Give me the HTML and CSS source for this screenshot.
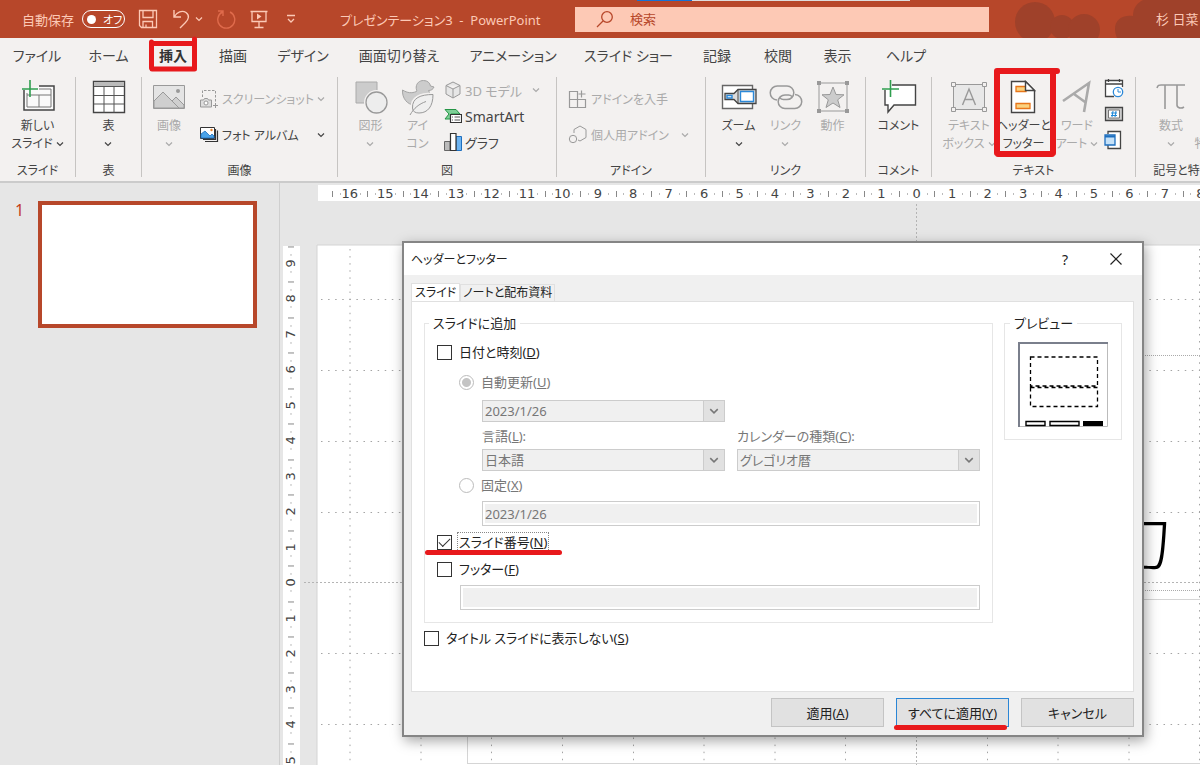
FILE: index.html
```html
<!DOCTYPE html>
<html lang="ja">
<head>
  <meta charset="UTF-8">
  <title>プレゼンテーション3 - PowerPoint</title>
  <meta name="viewport" content="width=device-width, initial-scale=1.0">
  <link rel="stylesheet" href="styles.css">
</head>
<body>

  <svg class="defs" aria-hidden="true">
    <symbol id="chev" viewBox="0 0 8 8"><path d="M1 2.5l3 3 3-3" fill="none" stroke="currentColor" stroke-width="1.2"/></symbol>
  </svg>

  <!-- タイトルバー -->
  <header class="titlebar">
    <div class="quick">
      <span>自動保存</span>
      <button class="toggle" type="button"><i></i>オフ</button>
      <button type="button" aria-label="保存"><svg width="20" height="20" viewBox="0 0 20 20"><path d="M1.500 1.500h17v17h-15l-2-2zM5 1.500v7h10v-7M5 18.500v-6h9.500v6M8 18.500v-3" fill="none" stroke="currentColor" stroke-width="1.300"/></svg></button>
      <button type="button" aria-label="元に戻す"><svg width="20" height="20" viewBox="0 0 20 20"><path d="M3 1v7h7M3 8C6 3 11 1 15 3.500c4 3 2.500 7-.5 10L9 19" fill="none" stroke="currentColor" stroke-width="1.400"/></svg><svg class="chev"><use href="#chev"/></svg></button>
      <button type="button" class="faded" aria-label="やり直し"><svg width="20" height="20" viewBox="0 0 20 20"><path d="M2 2h5v5M6.500 3A8.500 8.500 0 1 0 14 3" fill="none" stroke="currentColor" stroke-width="1.400"/></svg></button>
      <button type="button" aria-label="最初から"><svg width="20" height="20" viewBox="0 0 20 20"><path d="M1.500 2.500h17M3 2.500v10h14v-10M10 12.500v6M5.500 18.500h9" fill="none" stroke="currentColor" stroke-width="1.300"/><path d="M8 4.500v6l4.500-3z" fill="currentColor"/></svg></button>
      <button type="button" class="more" aria-label="カスタマイズ"><svg width="10" height="10" viewBox="0 0 10 10"><path d="M1 1.500h8M2 5l3 3 3-3" fill="none" stroke="currentColor" stroke-width="1.300"/></svg></button>
    </div>
    <div class="doc">プレゼンテーション3&nbsp; -&nbsp; PowerPoint</div>
    <label class="search">
      <svg width="18" height="18" viewBox="0 0 18 18"><circle cx="11" cy="7" r="5.300" fill="none" stroke="#b7472a" stroke-width="1.300"/><path d="M7 11l-6 6" stroke="#b7472a" stroke-width="1.300"/></svg>
      <input type="text" placeholder="検索" aria-label="検索">
    </label>
    <div class="user">
      <svg class="clouds" width="212" height="38"><g fill="#9a402a"><circle cx="34" cy="22" r="20"/><circle cx="61" cy="27" r="12"/><circle cx="83" cy="30" r="16"/><path d="M116 38c-6-14 2-24 16-22 0-8 4-13 10-16h70v38z"/></g></svg>
      <span>杉 日菜</span>
    </div>
    <i class="progress"></i>
  </header>

  <!-- リボンのタブ -->
  <nav class="tabs">
    <a href="#">ファイル</a>
    <a href="#">ホーム</a>
    <a href="#" class="current">挿入
      <svg class="mark" width="52" height="38"><path d="M5 7.500h41M4.500 6v26M5 33h41M47.500 3v30" fill="none" stroke="#e8191c" stroke-width="5" stroke-linecap="round"/></svg>
    </a>
    <a href="#">描画</a>
    <a href="#">デザイン</a>
    <a href="#">画面切り替え</a>
    <a href="#">アニメーション</a>
    <a href="#">スライド ショー</a>
    <a href="#">記録</a>
    <a href="#">校閲</a>
    <a href="#">表示</a>
    <a href="#">ヘルプ</a>
  </nav>

  <!-- リボン -->
  <div class="ribbon">
    <section class="group">
      <div class="tools">
        <button class="big" type="button">
          <svg width="36" height="36" viewBox="0 0 36 36"><path d="M4 11v20h30V7H19" fill="#fafafa" stroke="#444" stroke-width="1.500"/><path d="M7 14v14h24V10H19M7 16h24M19 16v12" fill="none" stroke="#777"/><path d="M2 10h16M10 1v17" stroke="#2f9e4f" stroke-width="1.600"/></svg>
          <span>新しい<br>スライド <svg class="chev"><use href="#chev"/></svg></span>
        </button>
      </div>
      <h2>スライド</h2>
    </section>

    <section class="group">
      <div class="tools">
        <button class="big" type="button">
          <svg width="34" height="34" viewBox="0 0 34 34"><path d="M1.500 1.500h31v31h-31z" fill="#fff" stroke="#444" stroke-width="1.400"/><path d="M2 2h30v4H2z" fill="#bbb"/><path d="M2 6.500h30M2 15.500h30M2 24h30M12 6.500v26M22 6.500v26" stroke="#555" fill="none"/></svg>
          <span>表<br><svg class="chev"><use href="#chev"/></svg></span>
        </button>
      </div>
      <h2>表</h2>
    </section>

    <section class="group pictures">
      <div class="tools">
        <button class="big off" type="button">
          <svg width="34" height="26" viewBox="0 0 34 26"><path d="M1.500 1.500h31v23h-31z" fill="#e4e4e4" stroke="#999"/><path d="M2 17L11 8l9 9 4-4 8 8v3H2z" fill="#cfcfcf" stroke="#999"/><path d="M20 17l7 7" stroke="#999"/><circle cx="26" cy="7" r="2" fill="#999"/></svg>
          <span>画像<br><svg class="chev"><use href="#chev"/></svg></span>
        </button>
        <div class="stack wide">
          <button class="small off" type="button"><svg width="20" height="20" viewBox="0 0 20 20"><path d="M3.500 8V1.500h13V14" fill="none" stroke="#999" stroke-dasharray="2.500 1.500"/><path d="M1.500 11h3l1-1.500h3l1 1.500h3v7h-11z" fill="#ddd" stroke="#999"/><circle cx="7" cy="14" r="2" fill="#fff" stroke="#999"/><path d="M14 16.500h5M16.500 14v5" stroke="#999"/></svg>スクリーンショット <svg class="chev last"><use href="#chev"/></svg></button>
          <button class="small" type="button"><svg width="20" height="18" viewBox="0 0 20 18"><path d="M6 15.500h12.500V4.500M4 13.500h12.500V3" fill="none" stroke="#333" stroke-width="1.200"/><path d="M1.500 1.500h14v11h-14z" fill="#fff" stroke="#333"/><path d="M2 8l4-3 5 5 2-2 2 2v2H2z" fill="#4ba3e8" stroke="#1e6fbf" stroke-width=".8"/><circle cx="12.500" cy="4" r="1.200" fill="#e8822a"/></svg>フォト アルバム <svg class="chev last"><use href="#chev"/></svg></button>
        </div>
      </div>
      <h2>画像</h2>
    </section>

    <section class="group shapes">
      <div class="tools">
        <button class="big narrow off" type="button">
          <svg width="34" height="34" viewBox="0 0 34 34"><path d="M2 2h21v21H2z" fill="#ccc" stroke="#aaa"/><circle cx="22.500" cy="22.500" r="11" fill="#f1efee" stroke="#f3f1f0" stroke-width="3"/><circle cx="22.500" cy="22.500" r="10.500" fill="#ededed" stroke="#999" stroke-width="1.300"/></svg>
          <span>図形<br><svg class="chev"><use href="#chev"/></svg></span>
        </button>
        <button class="big narrow off" type="button">
          <svg width="34" height="36" viewBox="0 0 34 36"><path d="M1.500 11c5 3 9 3.500 14 1.500.8-.8-.5-2-.3-4.500C15.600 4 18.500 1.500 22.500 1.500s6.500 2.500 7 5.500l3.500 1c-1 2.500-3 3.500-5.500 3.500 1.500 2 1 4.500.5 5.500-3 8-9 9-14 9C6 26 1 19 1.500 11z" fill="#ccc" stroke="#a4a4a4"/><path d="M11.500 29c-.5-10 8-13.500 20.500-13.500C32 27 27 34 18 34c-4 0-6.300-1.500-6.500-5z" fill="#efefef" stroke="#f3f1f0" stroke-width="4"/><path d="M11.500 29c-.5-10 8-13.500 20.500-13.500C32 27 27 34 18 34c-4 0-6.300-1.500-6.500-5z" fill="#efefef" stroke="#999"/><path d="M9 36c4-7 9-11 16-13.500" fill="none" stroke="#999"/></svg>
          <span>アイ<br>コン</span>
        </button>
        <div class="stack">
          <button class="small off" type="button"><svg width="18" height="18" viewBox="0 0 18 18"><path d="M9 1l7 3.500v8.500l-7 4-7-4V4.500zM2 4.500l7 3.500 7-3.500M9 8v9" fill="#e6e6e6" stroke="#999"/></svg>3D モデル <svg class="chev last"><use href="#chev"/></svg></button>
          <button class="small latin" type="button"><svg width="18" height="16" viewBox="0 0 18 16"><path d="M1 1.500h11l4 4.500h-9v5H1L5 6z" fill="#7dcf96" stroke="#259546"/><path d="M6.500 6.500h11v8h-11z" fill="#fff" stroke="#333" stroke-width="1.200"/><path d="M8 9h1M8 12h1M10.500 9H16M10.500 12H16" stroke="#555"/></svg>SmartArt</button>
          <button class="small" type="button"><svg width="18" height="20" viewBox="0 0 18 20"><path d="M.5 9.500H6v9H.5z" fill="#bbb" stroke="#666"/><path d="M12 4.500h5.500v14H12z" fill="#6db4f2" stroke="#1e6fbf"/><path d="M6.500 1.500H12v17H6.500z" fill="#fff" stroke="#333" stroke-width="1.200"/></svg>グラフ</button>
        </div>
      </div>
      <h2>図</h2>
    </section>

    <section class="group">
      <div class="tools">
        <div class="stack wide">
          <button class="small off" type="button"><svg width="20" height="20" viewBox="0 0 20 20"><path d="M1.500 2.500h8v16h-8zM1.500 10.500h16v8h-8M17.500 10.500v8h-8M13.500 1.500v7M10.500 5h7" fill="none" stroke="#999" stroke-width="1.200"/></svg>アドインを入手</button>
          <button class="small off" type="button"><svg width="20" height="20" viewBox="0 0 20 20"><path d="M6 8V4.500l6-3.500 6 3.500v8l-6 3.500-2-1" fill="none" stroke="#999"/><circle cx="5" cy="14" r="3.700" fill="none" stroke="#999"/></svg>個人用アドイン <svg class="chev last"><use href="#chev"/></svg></button>
        </div>
      </div>
      <h2>アドイン</h2>
    </section>

    <section class="group">
      <div class="tools">
        <button class="big narrow" type="button">
          <svg width="36" height="26" viewBox="0 0 36 26"><path d="M1.500 1.500h30v23h-30z" fill="#fff" stroke="#666" stroke-width="1.400"/><path d="M4 9.500h9l4-4h18v14H17l-4-4H4z" fill="#ddd" stroke="#444" stroke-width="1.300"/><path d="M17 5.500v14" stroke="#444"/><path d="M6 11.500h5v2.500H6zM19.500 7.500h13v10h-13z" fill="#fff" stroke="#2b88d8" stroke-width="1.400"/></svg>
          <span>ズーム<br><svg class="chev"><use href="#chev"/></svg></span>
        </button>
        <button class="big narrow off" type="button">
          <svg width="34" height="26" viewBox="0 0 34 26"><path d="M8 16a7 7 0 0 1 .5-14H18a6.800 6.800 0 0 1 0 13.600h-3.500a5 5 0 0 1-3.500-1.600M26 10.500a7 7 0 0 1-.5 14H16a6.800 6.800 0 0 1 0-13.600h3.500a5 5 0 0 1 3.500 1.600" fill="none" stroke="#999" stroke-width="1.500"/></svg>
          <span>リンク<br><svg class="chev"><use href="#chev"/></svg></span>
        </button>
        <button class="big narrow off" type="button">
          <svg width="34" height="34" viewBox="0 0 34 34"><path d="M3 3h28v28H3z" fill="none" stroke="#999"/><path d="M1 1h4v4H1zM29 1h4v4h-4zM1 29h4v4H1zM29 29h4v4h-4z" fill="#999"/><path d="M17 7l3 7.500 8 .3-6.300 5 2.300 7.700-7-4.500-7 4.500 2.300-7.700-6.300-5 8-.3z" fill="#ccc" stroke="#999"/></svg>
          <span>動作</span>
        </button>
      </div>
      <h2>リンク</h2>
    </section>

    <section class="group">
      <div class="tools">
        <button class="big" type="button">
          <svg width="36" height="36" viewBox="0 0 36 36"><path d="M11 6h23.500v20H13l-6 7v-7H4V11" fill="#fff" stroke="#444" stroke-width="1.400"/><path d="M1 10h17M9.500 1v17" stroke="#2f9e4f" stroke-width="1.600"/></svg>
          <span>コメント</span>
        </button>
      </div>
      <h2>コメント</h2>
    </section>

    <section class="group">
      <div class="tools text-tools">
        <button class="big off" type="button">
          <svg width="38" height="32" viewBox="0 0 38 32"><path d="M3.500 3.500h31v25h-31z" fill="#e8e8e8" stroke="#999"/><path d="M1.500 1.500h4v4h-4zM32.500 1.500h4v4h-4zM1.500 26.500h4v4h-4zM32.500 26.500h4v4h-4z" fill="#f3f1f0" stroke="#999"/><path d="M12.500 24L19 8l6.500 16M15 18.500h8" fill="none" stroke="#999" stroke-width="1.400"/></svg>
          <span>テキスト<br>ボックス <svg class="chev"><use href="#chev"/></svg></span>
        </button>
        <button class="big" type="button">
          <svg width="26" height="34" viewBox="0 0 26 34"><path d="M1.500 1.500h14l9 9v22h-23z" fill="#fff" stroke="#444" stroke-width="1.400"/><path d="M6 6.500h10v5H6zM6 23.500h14v5H6z" fill="#fbd27f" stroke="#e8761a" stroke-width="1.300"/><path d="M15.500 1.500v9h9z" fill="#fff" stroke="#444" stroke-width="1.400"/></svg>
          <span>ヘッダーと<br>フッター</span>
          <svg class="mark" width="72" height="96"><path d="M6 6h60M6 6v82M7 89h54M62 6v82" fill="none" stroke="#e8191c" stroke-width="6" stroke-linecap="round"/></svg>
        </button>
        <button class="big off" type="button">
          <svg width="30" height="34" viewBox="0 0 30 34"><path d="M1 21L27 3l-5 29M12 14l11 8" fill="none" stroke="#aaa" stroke-width="2.600"/></svg>
          <span>ワード<br>アート <svg class="chev"><use href="#chev"/></svg></span>
        </button>
        <div class="icons">
          <button type="button" aria-label="日付と時刻"><svg width="20" height="20" viewBox="0 0 20 20"><path d="M10 18.500H1.500v-16h17V9" fill="#fff" stroke="#444" stroke-width="1.300"/><path d="M1.500 6h17M4.500 1v3M15.500 1v3" stroke="#444" stroke-width="1.300"/><circle cx="14" cy="14" r="4.700" fill="#fff" stroke="#2b88d8" stroke-width="1.300"/><path d="M14 11v3h3" fill="none" stroke="#2b88d8"/></svg></button>
          <button type="button" aria-label="スライド番号"><svg width="20" height="16" viewBox="0 0 20 16"><path d="M1.500 1.500h17v13h-17z" fill="#ccc" stroke="#444" stroke-width="1.300"/><path d="M4.500 4h11v8h-11z" fill="#fff" stroke="#777"/><path d="M9 5l-1 6M12 5l-1 6M7 7h6M7 9.500h6" stroke="#1e88d8"/></svg></button>
          <button type="button" aria-label="オブジェクト"><svg width="20" height="20" viewBox="0 0 20 20"><path d="M4 4V1.500h12.500v17H4V15" fill="#fff" stroke="#444" stroke-width="1.300"/><path d="M1 5h10v10H1z" fill="#c5e1f8" stroke="#1e6fbf" stroke-width="1.300"/><path d="M1 6.500h10" stroke="#1e6fbf" stroke-width="2"/></svg></button>
        </div>
      </div>
      <h2>テキスト</h2>
    </section>

    <section class="group cut">
      <div class="tools">
        <button class="big narrow off" type="button">
          <svg width="30" height="28" viewBox="0 0 30 28"><path d="M1 5c1-3 2-3 4-3h24M9 2v24M21 2v20c0 3 4 4 7 2" fill="none" stroke="#999" stroke-width="1.600"/></svg>
          <span>数式<br><svg class="chev"><use href="#chev"/></svg></span>
        </button>
        <button class="big narrow off" type="button">
          <svg width="10" height="34"></svg>
          <span>記号と<br>特殊文字</span>
        </button>
      </div>
      <h2>記号と特殊文字</h2>
    </section>
  </div>

  <!-- 編集領域 -->
  <main class="workspace">
    <aside class="slides">
      <b>1</b>
      <div class="thumb"></div>
    </aside>

    <div class="editor">
      <div class="ruler-h" id="rulerH"></div>
      <div class="ruler-v" id="rulerV"></div>
      <svg class="canvas">
        <g transform="translate(-280 -183)">
          <path d="M317 245h1000v700H317z" fill="#fff" stroke="#d4d4d4"/>
          <g fill="none" stroke="#a4a4a4" stroke-dasharray="1.500 5.580">
            <path d="M350 249v540M421 249v540M491.500 249v540M562.500 249v540M633.500 249v540M704 249v540M775 249v540M845.500 249v540M987.500 249v540M1058 249v540M1129 249v540M1199.500 249v540"/>
            <path d="M321 299.500h900M321 370.500h900M321 441.500h900M321 512.500h900M321 653.500h900M321 724.500h900"/>
          </g>
          <g fill="none" stroke="#b4b4b4" stroke-dasharray="2 2">
            <path d="M916.500 204v600M304 582.500h900"/>
          </g>
          <g fill="none" stroke="#aaa" stroke-dasharray="1 1">
            <path d="M467 355.500h900v235H467zM467.500 599.500h900v164h-900z"/>
          </g>
          <text class="title-text" x="1105" y="564">力</text>
        </g>
      </svg>

      <!-- ヘッダーとフッター -->
      <form class="dialog">
        <div class="dialog-title">
          <h1>ヘッダーとフッター</h1>
          <button type="button" class="help">?</button>
          <button type="button" aria-label="閉じる"><svg width="12" height="12" viewBox="0 0 12 12"><path d="M.5.5l11 11M11.500.5l-11 11" stroke="#222" stroke-width="1.200"/></svg></button>
        </div>
        <div class="dialog-body">
          <div class="dialog-tabs">
            <button type="button" class="active">スライド</button>
            <button type="button">ノートと配布資料</button>
          </div>
          <div class="panel">
            <fieldset class="add">
              <legend>スライドに追加</legend>
              <label class="row"><input type="checkbox"><span>日付と時刻(<u>D</u>)</span></label>
              <label class="row sub gray first"><input type="radio" name="date" checked disabled><span>自動更新(<u>U</u>)</span></label>
              <div class="pair date">
                <div class="pick"><select aria-label="日付" disabled><option>2023/1/26</option></select><svg class="chev"><use href="#chev"/></svg></div>
              </div>
              <div class="pair">
                <div>
                  <label for="lang">言語(<u>L</u>):</label>
                  <div class="pick"><select id="lang" disabled><option>日本語</option></select><svg class="chev"><use href="#chev"/></svg></div>
                </div>
                <div>
                  <label for="cal">カレンダーの種類(<u>C</u>):</label>
                  <div class="pick"><select id="cal" disabled><option>グレゴリオ暦</option></select><svg class="chev"><use href="#chev"/></svg></div>
                </div>
              </div>
              <label class="row sub gray fixed"><input type="radio" name="date" disabled><span>固定(<u>X</u>)</span></label>
              <input class="field indent" type="text" value="2023/1/26" aria-label="固定の日付" disabled>
              <label class="row number"><input type="checkbox" checked><span class="focus">スライド番号(<u>N</u>)</span><i class="line"></i></label>
              <label class="row foot"><input type="checkbox"><span>フッター(<u>F</u>)</span></label>
              <input class="field" type="text" aria-label="フッターの文字" disabled>
            </fieldset>
            <fieldset class="preview">
              <legend>プレビュー</legend>
              <svg width="90" height="85" viewBox="0 0 90 85"><path d="M0 0h90v85H0z" fill="#fff"/><path d="M.5 84.500h89V1" fill="none" stroke="#bbb"/><path d="M1 85V1h89" fill="none" stroke="#7a7f8c" stroke-width="2"/><path d="M12.500 15h67v29h-67zM12.500 45.500h67v19h-67z" fill="none" stroke="#000" stroke-width="1.300" stroke-dasharray="4 3"/><path d="M8 79.500h19v4H8zM32 79.500h29v4H32z" fill="#fff" stroke="#000" stroke-width="1.400"/><path d="M65 79h20v5H65z"/></svg>
            </fieldset>
            <label class="row hide-title"><input type="checkbox"><span>タイトル スライドに表示しない(<u>S</u>)</span></label>
          </div>
          <div class="actions">
            <button type="button">適用(<u>A</u>)</button>
            <button type="button" class="default">すべてに適用(<u>Y</u>)<i class="line"></i></button>
            <button type="button">キャンセル</button>
          </div>
        </div>
      </form>
    </div>
  </main>

  <script>
    // ルーラーの目盛り
    function ruler(id, from, to) {
      let html = '';
      for (let n = -from; n <= to; n++) {
        html += '<span>' + Math.abs(n) + '</span>';
      }
      document.getElementById(id).innerHTML = html;
    }
    ruler('rulerH', 16, 8);
    ruler('rulerV', 9, 5);
  </script>

</body>
</html>
```
FILE: styles.css
```css
* {
  box-sizing: border-box;
}

body {
  margin: 0;
  min-height: 100vh;
  display: flex;
  flex-direction: column;
  overflow: hidden;
  font-family: "Noto Sans", "Noto Sans CJK JP", sans-serif;
  font-size: 13px;
  font-feature-settings: "palt";
  color: #444;
  background: #e6e6e6;
}

button, input, select {
  font: inherit;
  font-feature-settings: inherit;
  color: inherit;
}

button {
  padding: 0;
  border: none;
  background: none;
  white-space: nowrap;
}

.defs {
  position: absolute;
  width: 0;
  height: 0;
}

.chev {
  width: 8px;
  height: 8px;
}

/* タイトルバー */
.titlebar {
  position: relative;
  display: grid;
  grid-template-columns: 340px 235px minmax(0, 414px) 1fr;
  align-items: center;
  height: 38px;
  background: #b7472a;
  color: #fcc9b6;
}

.quick {
  display: flex;
  align-items: center;
  gap: 13px;
  padding-left: 22px;
}

.quick button {
  display: flex;
  align-items: center;
  gap: 4px;
}

.quick .toggle {
  gap: 7px;
  width: 43px;
  height: 18px;
  margin-left: -5px;
  padding-left: 4px;
  border: 1px solid #fff;
  border-radius: 9px;
  font-size: 11px;
  color: #fff;
}

.toggle i {
  width: 9px;
  height: 9px;
  border-radius: 50%;
  background: #fff;
}

.quick .faded {
  color: #df6b4c;
}

.quick .more {
  margin-left: 4px;
}

.search {
  display: flex;
  align-items: center;
  gap: 14px;
  height: 25px;
  padding-left: 21px;
  background: #fdc9b5;
}

.search input {
  flex: 1;
  min-width: 0;
  border: none;
  outline: none;
  background: none;
}

.search input::placeholder {
  color: #b7472a;
}

.user {
  position: relative;
  height: 38px;
  line-height: 38px;
  padding-left: 167px;
  overflow: hidden;
  white-space: nowrap;
}

.user span {
  position: relative;
}

.clouds {
  position: absolute;
  top: 0;
  left: 12px;
  opacity: 0.8;
}

.progress {
  position: absolute;
  top: 0;
  left: 637px;
  width: 273px;
  height: 1px;
  background: linear-gradient(to right, #1672d4 55px, #ddd 55px);
}

/* タブ */
.tabs {
  display: grid;
  grid-template-columns: 74px 69px 60px 60px 80px 112px 116px 115px 62px 60px 59px 78px;
  height: 34px;
  line-height: 35px;
  background: #f3f1f0;
  font-size: 14px;
  text-align: center;
}

.tabs a {
  position: relative;
  color: #444;
  text-decoration: none;
  white-space: nowrap;
}

.tabs .current {
  font-weight: bold;
  color: #333;
}

/* 赤い囲み */
.mark {
  position: absolute;
  top: -2px;
  left: 4px;
  pointer-events: none;
}

/* リボン */
.ribbon {
  display: grid;
  grid-template-columns: 76px 66px 196px 219px 149px 160px 66px 204px 1fr;
  height: 111px;
  padding: 5px 0;
  background: #f3f1f0;
  border-bottom: 2px solid #cbcbcb;
}

.group {
  display: flex;
  flex-direction: column;
  height: 100px;
  border-right: 1px solid #c6c4c2;
}

.group h2 {
  margin: auto 0 0;
  font-size: 12px;
  line-height: 12px;
  font-weight: normal;
  text-align: center;
  white-space: nowrap;
}

.tools {
  display: flex;
  justify-content: center;
  height: 80px;
}

.big {
  position: relative;
  display: grid;
  grid-template-rows: 40px auto;
  justify-items: center;
  align-items: center;
  align-content: start;
  width: 60px;
  font-size: 12px;
  line-height: 18px;
}

.narrow {
  width: 47px;
}

.off {
  color: #aaa;
}

.stack {
  flex: 1;
  display: grid;
  align-content: start;
  grid-auto-rows: 26px;
  padding-right: 16px;
}

.stack.wide {
  align-content: center;
  grid-auto-rows: 36px;
  font-size: 12px;
}

.tools > .stack:first-child {
  padding-left: 11px;
}

.small {
  display: flex;
  align-items: center;
  gap: 3px;
}

.small.latin {
  font-size: 14px;
}

.small .last {
  margin-left: auto;
}

.pictures .tools {
  padding-left: 3px;
}

.pictures .big {
  flex: none;
}

.pictures .stack {
  padding-right: 18px;
}

.shapes .tools {
  padding-left: 9px;
}

.shapes .stack {
  padding-left: 3px;
}

.text-tools {
  justify-content: flex-start;
  padding-left: 10px;
}

.text-tools .big {
  width: 54px;
}

.text-tools .mark {
  top: -12px;
  left: -5px;
  z-index: 1;
}

.icons {
  display: grid;
  grid-auto-rows: 26px;
  align-items: center;
}

.cut {
  width: 118px;
}

/* 編集領域 */
.workspace {
  flex: 1;
  display: grid;
  grid-template-columns: 280px 1fr;
}

.slides {
  display: flex;
  align-items: flex-start;
  gap: 14px;
  padding: 18px 22px 0 15px;
  border-right: 1px solid #cfcfcf;
}

.slides b {
  font-size: 16px;
  line-height: 18px;
  font-weight: normal;
  color: #c43e1c;
}

.thumb {
  flex: 1;
  aspect-ratio: 219 / 127;
  border: 4px solid #b7472a;
  background: #fff;
}

.editor {
  position: relative;
  overflow: hidden;
}

.ruler-h, .ruler-v {
  position: absolute;
  display: grid;
  background: #fff;
  font-family: "DejaVu Sans", sans-serif;
  text-align: center;
}

.ruler-h {
  top: 2px;
  left: 38px;
  right: -18px;
  height: 16px;
  line-height: 18px;
  padding-left: 14px;
  grid-auto-flow: column;
  grid-auto-columns: 1fr;
}

.ruler-v {
  top: 63px;
  left: 3px;
  bottom: -13px;
  width: 17px;
  line-height: 16px;
  grid-auto-rows: 1fr;
  z-index: 1;
}

.ruler-h span {
  background:
    linear-gradient(#888, #888) 0 50% / 1px 6px no-repeat,
    linear-gradient(#bbb, #bbb) 22% 50% / 1px 2px no-repeat,
    linear-gradient(#bbb, #bbb) 80% 50% / 1px 2px no-repeat;
}

.ruler-v span {
  writing-mode: vertical-rl;
  transform: rotate(180deg);
  background:
    linear-gradient(#888, #888) 50% 100% / 6px 1px no-repeat,
    linear-gradient(#bbb, #bbb) 50% 25% / 2px 1px no-repeat,
    linear-gradient(#bbb, #bbb) 50% 75% / 2px 1px no-repeat;
}

.canvas {
  position: absolute;
  top: 0;
  left: 0;
  width: 100%;
  height: 100%;
}

.title-text {
  font-size: 68px;
  font-weight: 300;
  fill: #000;
}

/* ダイアログ */
.dialog {
  position: absolute;
  top: 58px;
  left: 122px;
  z-index: 2;
  width: 742px;
  border: 2px solid #858585;
  border-top-width: 2px;
  background: #f0f0f0;
  box-shadow: 2px 4px 12px rgba(0, 0, 0, 0.35);
  color: #222;
}

.dialog-title {
  display: flex;
  align-items: center;
  height: 32px;
  padding: 0 20px 0 7px;
  background: #fff;
}

.dialog-title h1 {
  margin: 0 auto 0 0;
  font-size: 12px;
  font-weight: normal;
}

.dialog-title button {
  display: flex;
  align-items: center;
}

.dialog-title .help {
  margin-right: 42px;
  font-size: 14px;
}

.dialog-body {
  padding: 8px 8px 8px 7px;
}

.dialog-tabs {
  display: flex;
  align-items: flex-end;
}

.dialog-tabs button {
  height: 17px;
  padding: 0 2px;
  border: 1px solid #e0e0e0;
  border-bottom: none;
  line-height: 16px;
  font-size: 12px;
}

.dialog-tabs .active {
  height: 18px;
  padding: 0 3px;
  background: #fff;
}

.panel {
  display: grid;
  grid-template-columns: 1fr 118px;
  column-gap: 11px;
  align-items: start;
  min-height: 391px;
  padding: 12px 11px 42px 12px;
  border: 1px solid #e0e0e0;
  background: #fff;
}

fieldset {
  min-width: 0;
  margin: 0;
  border: 1px solid #e6e6e6;
}

legend {
  padding: 0 4px;
  line-height: 18px;
}

.add {
  padding: 10px 12px 12px;
}

.add legend {
  margin-left: -8px;
}

.preview {
  height: 126px;
  padding: 10px 13px;
}

.preview legend {
  margin-left: -8px;
}

.row {
  position: relative;
  display: flex;
  align-items: center;
  gap: 7px;
  height: 20px;
  line-height: 16px;
}

.gray, .pair {
  color: #777;
}

.sub {
  padding-left: 22px;
}

.first {
  margin-top: 10px;
}

.pair {
  display: grid;
  grid-template-columns: 1fr 1fr;
  gap: 12px;
  margin-top: 4px;
  padding-left: 45px;
}

.pair label {
  display: block;
  height: 20px;
  margin-bottom: 3px;
  line-height: 20px;
}

.date {
  margin-top: 8px;
}

.pick {
  position: relative;
  height: 22px;
}

.pick select {
  appearance: none;
  width: 100%;
  height: 22px;
  padding: 0 24px 0 2px;
  border: 1px solid #ccc;
  border-radius: 0;
  background: linear-gradient(to left, #e1e1e1 20px, #ccc 20px, #ccc 21px, #f0f0f0 21px);
  color: #777;
  opacity: 1;
}

.pick .chev {
  position: absolute;
  top: 6px;
  right: 6px;
  width: 10px;
  height: 10px;
}

.fixed {
  margin-top: 4px;
}

.row input {
  flex: none;
  appearance: none;
  width: 15px;
  height: 15px;
  margin: 0;
  border: 1px solid #333;
  background: #fff;
}

.row input[type="radio"] {
  border-color: #bbb;
  border-radius: 50%;
}

.row input[type="radio"]:checked {
  background: radial-gradient(#c4c4c4 4px, #fff 5px);
}

.row input[type="checkbox"]:checked::after {
  content: "";
  display: block;
  width: 10px;
  height: 5px;
  margin: 2px 0 0 1px;
  border: solid #333;
  border-width: 0 0 1px 1px;
  transform: rotate(-45deg);
}

.field {
  display: block;
  width: calc(100% - 23px);
  height: 25px;
  margin: 6px 0 0 23px;
  padding: 0 2px;
  border: 1px solid #ccc;
  background: #f0f0f0;
  box-shadow: inset 0 0 0 2px #fff;
  color: #777;
}

.indent {
  width: calc(100% - 45px);
  margin-left: 45px;
}

.number {
  margin-top: 6px;
}

.foot {
  margin-top: 7px;
}

.focus {
  outline: 1px dotted #888;
  outline-offset: 1px;
}

/* 赤い下線 */
.line {
  position: absolute;
  bottom: -3px;
  left: -12px;
  width: 137px;
  height: 5px;
  border-radius: 3px;
  background: #e8191c;
}

.hide-title {
  grid-column: 1 / -1;
  margin-top: 4px;
}

.actions {
  display: flex;
  justify-content: flex-end;
  gap: 12px;
  margin-top: 6px;
}

.actions button {
  position: relative;
  width: 113px;
  height: 29px;
  border: 1px solid #c4c4c4;
  background: #e1e1e1;
}

.actions .default {
  border: 1px solid #2a86d6;
}

.actions .line {
  bottom: -4px;
  left: -3px;
  width: 113px;
}
```
